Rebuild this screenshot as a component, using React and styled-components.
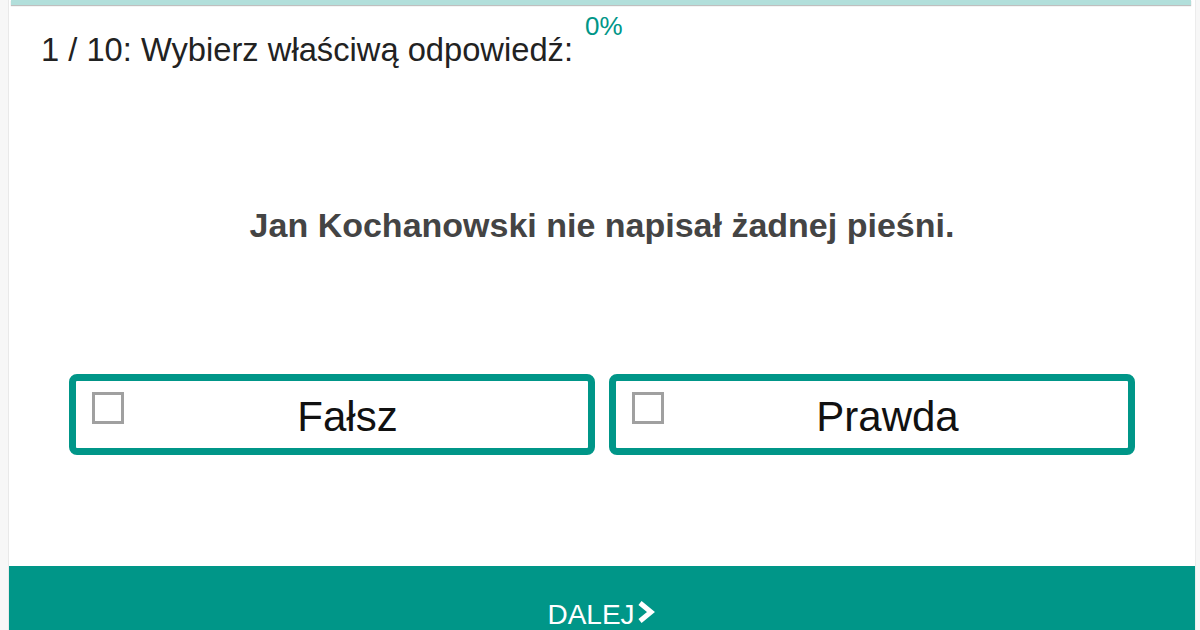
import styled, { createGlobalStyle } from 'styled-components';

const GlobalStyle = createGlobalStyle`
    html, body {
        margin: 0;
        padding: 0;
        background: #f7f7f7;
        font-family: "Liberation Sans", Arial, sans-serif;
    }
`;

const Page = styled.div`
    height: 630px;
    overflow: hidden;
    padding: 0 4px 0 8px;
    background: #f7f7f7;
`;

const Card = styled.div`
    height: 100%;
    display: flex;
    flex-direction: column;
    background: #fff;
    border-left: 1px solid #e9e9e9;
    border-right: 1px solid #ececec;
`;

const ProgressTrack = styled.div`
    height: 5px;
    margin: 0 4px 0 2px;
    background: #b2dfdb;
    box-shadow: 0 1px 1px rgba(0, 0, 0, 0.25);
`;

const Header = styled.div`
    display: flex;
    align-items: flex-start;
    padding-left: 32px;
    margin-top: 7px;
`;

const Label = styled.div`
    margin-top: 19px;
    font-size: 32.7px;
    line-height: 1.15;
    color: #222;
`;

const Percent = styled.div`
    margin-left: 12px;
    font-size: 26px;
    line-height: 1.15;
    color: #009688;
`;

const Question = styled.h2`
    margin: 137px 0 0;
    text-align: center;
    font-size: 34px;
    line-height: 1.15;
    font-weight: 700;
    color: #444;
`;

const Options = styled.div`
    display: grid;
    grid-template-columns: 1fr 1fr;
    gap: 14px;
    margin-top: 129px;
    padding: 0 60px;
`;

const Option = styled.label`
    display: flex;
    align-items: flex-start;
    height: 81px;
    box-sizing: border-box;
    padding: 0 17px 0 16px;
    border: 7px solid #009688;
    border-radius: 8px;
    cursor: pointer;
`;

const Box = styled.span`
    flex: none;
    width: 32px;
    height: 32px;
    margin-top: 11px;
    box-sizing: border-box;
    border: 3px solid #a0a0a0;
    background: ${props => props.checked ? '#009688' : '#fff'};
`;

const OptionText = styled.span`
    flex: 1;
    align-self: center;
    padding-top: 5px;
    text-align: center;
    font-size: 42px;
    line-height: 1;
    color: #111;
`;

const Footer = styled.button`
    margin-top: auto;
    height: 64px;
    border: none;
    background: #009688;
    color: #fff;
    font-family: inherit;
    font-size: 28px;
    display: flex;
    justify-content: center;
    align-items: flex-start;
    padding: 33px 0 0;
    cursor: pointer;
`;

const Chevron = () => (
    <svg width="22" height="24" viewBox="0 0 22 24" style={{ marginTop: 1 }}>
        <path d="M5 3 L16 12 L5 21" fill="none" stroke="#fff" strokeWidth="5" strokeLinejoin="miter" />
    </svg>
);

const answers = ['Fałsz', 'Prawda'];

export default function App() {
    return (
        <>
            <GlobalStyle />
            <Page>
                <Card>
                    <ProgressTrack />
                    <Header>
                        <Label>1 / 10: Wybierz właściwą odpowiedź:</Label>
                        <Percent>0%</Percent>
                    </Header>
                    <Question>Jan Kochanowski nie napisał żadnej pieśni.</Question>
                    <Options>
                        {answers.map(answer => (
                            <Option key={answer}>
                                <Box />
                                <OptionText>{answer}</OptionText>
                            </Option>
                        ))}
                    </Options>
                    <Footer>
                        DALEJ<Chevron />
                    </Footer>
                </Card>
            </Page>
        </>
    );
}
